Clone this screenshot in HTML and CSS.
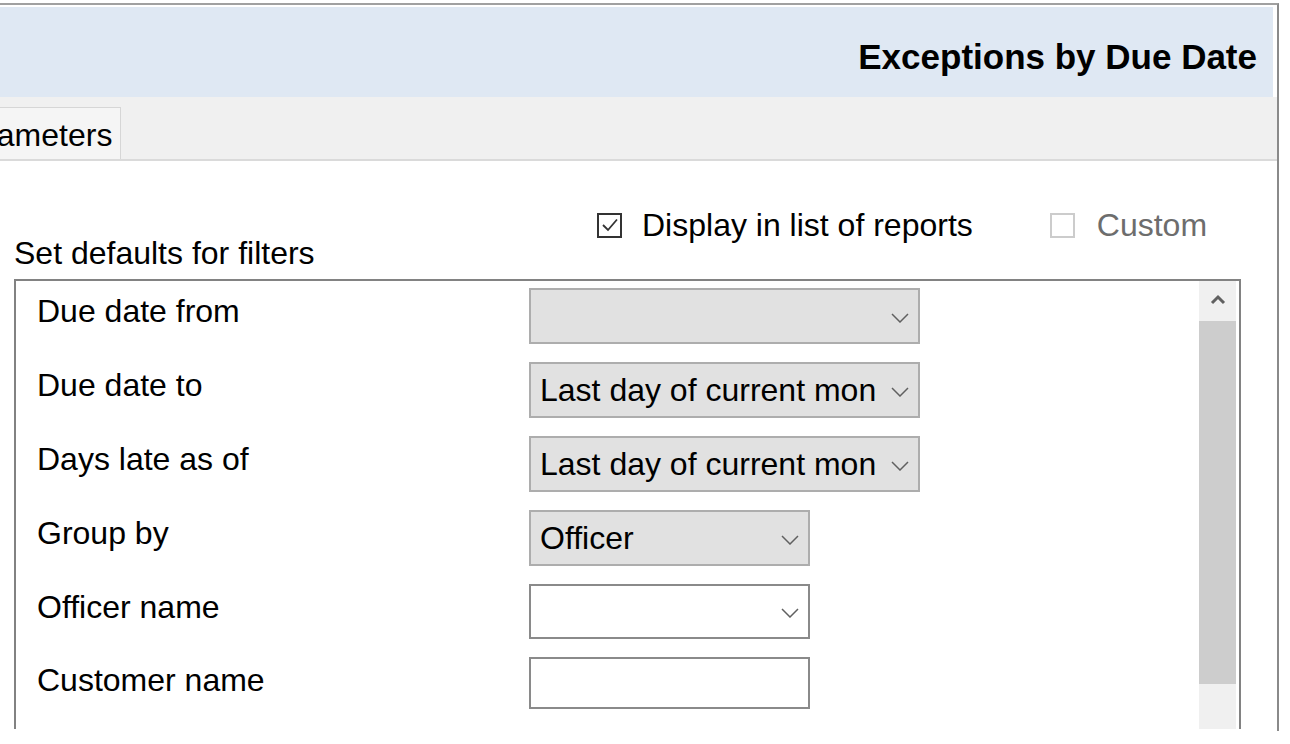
FILE: index.html
```html
<!DOCTYPE html>
<html lang="en">
<head>
    <meta charset="UTF-8">
    <meta name="viewport" content="width=device-width, initial-scale=1.0">
    <title>Exceptions by Due Date</title>
    <link rel="stylesheet" href="styles.css">
</head>
<body>

<div class="window">
    <header class="report-header">
        <h1>Exceptions by Due Date</h1>
    </header>

    <div class="tab-strip">
        <div class="tab">Parameters</div>
    </div>

    <div class="content">
        <div class="filters-head">
            <div class="filters-title">Set defaults for filters</div>
            <div class="options">
                <label class="check">
                    <span class="box checked">
                        <svg width="20" height="20" viewBox="0 0 20 20"><path d="M3 10 L8 15 L17 4.5" fill="none" stroke="#333" stroke-width="1.8"/></svg>
                    </span>
                    Display in list of reports
                </label>
                <label class="check disabled">
                    <span class="box"></span>
                    Custom
                </label>
            </div>
        </div>

        <div class="filters-panel">
            <div class="rows">
                <div class="row">
                    <span class="label">Due date from</span>
                    <div class="combo wide">
                        <span class="value"></span>
                        <svg class="chevron" width="18" height="10" viewBox="0 0 18 10"><polyline points="1,1 9,9 17,1" fill="none" stroke="#606060" stroke-width="1.5"/></svg>
                    </div>
                </div>
                <div class="row">
                    <span class="label">Due date to</span>
                    <div class="combo wide">
                        <span class="value">Last day of current mon</span>
                        <svg class="chevron" width="18" height="10" viewBox="0 0 18 10"><polyline points="1,1 9,9 17,1" fill="none" stroke="#606060" stroke-width="1.5"/></svg>
                    </div>
                </div>
                <div class="row">
                    <span class="label">Days late as of</span>
                    <div class="combo wide">
                        <span class="value">Last day of current mon</span>
                        <svg class="chevron" width="18" height="10" viewBox="0 0 18 10"><polyline points="1,1 9,9 17,1" fill="none" stroke="#606060" stroke-width="1.5"/></svg>
                    </div>
                </div>
                <div class="row">
                    <span class="label">Group by</span>
                    <div class="combo">
                        <span class="value">Officer</span>
                        <svg class="chevron" width="18" height="10" viewBox="0 0 18 10"><polyline points="1,1 9,9 17,1" fill="none" stroke="#606060" stroke-width="1.5"/></svg>
                    </div>
                </div>
                <div class="row">
                    <span class="label">Officer name</span>
                    <div class="combo editable">
                        <span class="value"></span>
                        <svg class="chevron" width="18" height="10" viewBox="0 0 18 10"><polyline points="1,1 9,9 17,1" fill="none" stroke="#606060" stroke-width="1.5"/></svg>
                    </div>
                </div>
                <div class="row">
                    <span class="label">Customer name</span>
                    <div class="textbox"></div>
                </div>
            </div>

            <div class="scrollbar">
                <div class="scroll-up">
                    <svg width="16" height="11" viewBox="0 0 16 11"><polyline points="2,9 8,3 14,9" fill="none" stroke="#606060" stroke-width="3"/></svg>
                </div>
                <div class="scroll-thumb"></div>
                <div class="scroll-track"></div>
            </div>
        </div>
    </div>
</div>

</body>
</html>
```

FILE: styles.css
```css
* {
    margin: 0;
    padding: 0;
    box-sizing: border-box;
}

body {
    font-family: 'Liberation Sans', Arial, sans-serif;
    font-size: 32px;
    color: #000;
    background-color: #fff;
    padding-top: 3px;
    overflow: hidden;
}

.window {
    width: 1279px;
    height: 728px;
    border-top: 2px solid #a0a0a0;
    border-right: 2px solid #8a8a8a;
    padding-top: 2px;
}

/* header band */
.report-header {
    height: 90px;
    margin-right: 4px;
    background-color: #dfe8f3;
    display: flex;
    justify-content: flex-end;
    align-items: center;
    padding: 10px 16px 0 0;
}

.report-header h1 {
    font-size: 35px;
    font-weight: bold;
    line-height: 40px;
}

/* tabs */
.tab-strip {
    height: 64px;
    background-color: #f0f0f0;
    border-bottom: 2px solid #dadada;
    padding-top: 10px;
}

.tab {
    display: inline-block;
    height: 52px;
    margin-left: -56px;
    padding: 0 8px 0 2px;
    line-height: 54px;
    background-color: #f5f5f5;
    border: 1px solid #d6d6d6;
    border-bottom: none;
}

/* content */
.content {
    padding-left: 14px;
}

.filters-head {
    display: flex;
    align-items: flex-end;
    padding-top: 46px;
}

.filters-title {
    width: 583px;
    line-height: 36px;
}

.options {
    display: flex;
    align-items: center;
    margin-bottom: 28px;
    line-height: 36px;
}

.check {
    display: flex;
    align-items: center;
}

.check .box {
    flex-shrink: 0;
    width: 25px;
    height: 25px;
    margin-right: 20px;
    border: 2px solid #333;
    display: flex;
    align-items: center;
    justify-content: center;
}

.check.disabled {
    margin-left: 77px;
    color: #6d6d6d;
}

.check.disabled .box {
    border-color: #cccccc;
    margin-right: 22px;
}

/* filter list */
.filters-panel {
    width: 1227px;
    height: 450px;
    margin-top: 8px;
    border: 2px solid #828282;
    border-bottom: none;
    display: flex;
}

.rows {
    flex: 1;
    padding: 7px 0 0 21px;
    display: flex;
    flex-direction: column;
    gap: 18px;
}

.row {
    display: flex;
    align-items: flex-start;
}

.label {
    width: 492px;
    line-height: 36px;
    margin-top: 5px;
}

.combo {
    width: 281px;
    height: 56px;
    background-color: #e1e1e1;
    border: 2px solid #adadad;
    display: flex;
    align-items: center;
    justify-content: space-between;
    padding: 0 9px 0 9px;
    white-space: nowrap;
    overflow: hidden;
}

.combo.wide {
    width: 391px;
}

.combo.editable {
    height: 55px;
    background-color: #fff;
    border-color: #8a8a8a;
}

.combo .chevron {
    flex-shrink: 0;
    margin-top: 3px;
}

.textbox {
    width: 281px;
    height: 52px;
    background-color: #fff;
    border: 2px solid #8a8a8a;
}

/* scrollbar */
.scrollbar {
    width: 37px;
    margin-right: 3px;
    display: flex;
    flex-direction: column;
    background-color: #f0f0f0;
}

.scroll-up {
    height: 40px;
    display: flex;
    align-items: center;
    justify-content: center;
    padding-bottom: 4px;
}

.scroll-thumb {
    height: 363px;
    background-color: #cdcdcd;
}

.scroll-track {
    flex: 1;
}
```
